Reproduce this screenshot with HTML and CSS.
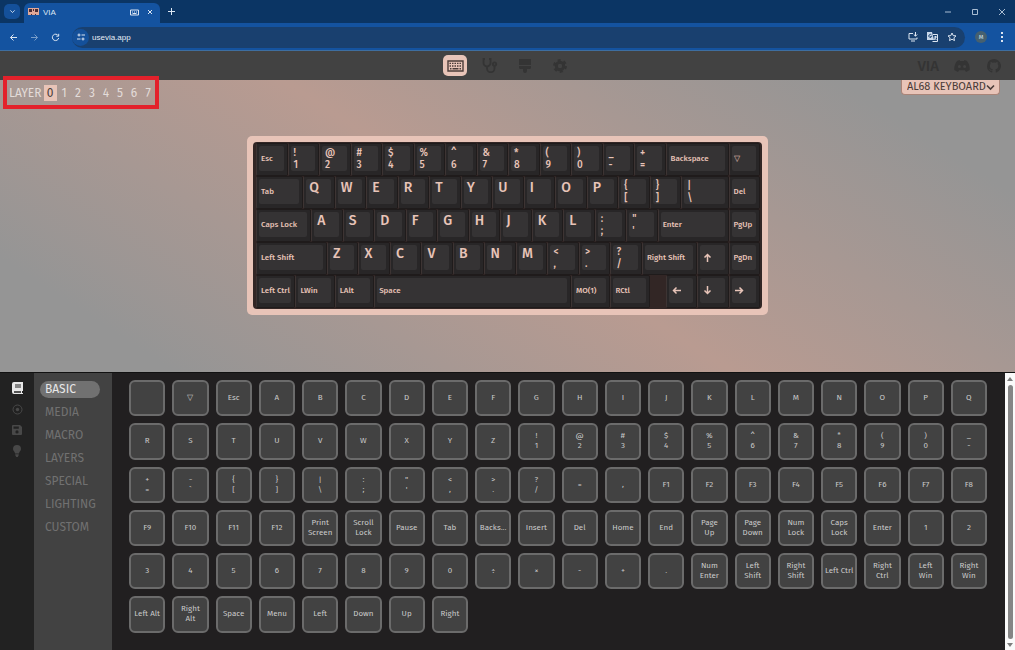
FILE: index.html
```html
<!DOCTYPE html>
<html lang="en">
<head>
    <meta charset="UTF-8">
    <title>VIA</title>
    <link rel="stylesheet" href="styles.css">
</head>
<body>
    <div class="tab-strip">
        <button class="tab-search" aria-label="Search tabs">
            <svg width="7" height="7" viewBox="0 0 8 8"><path d="M1.5 2.7 4 5.2l2.5-2.5"/></svg>
        </button>
        <div class="tab">
            <svg class="favicon" width="11" height="8" viewBox="0 0 11 8"><path fill="#e0a898" d="M0 0h11v7H0z"/><path fill="#4a2c35" d="M1 1h3v3H1zM7 1h3v3H7zM5 1h1v2H5zM3 6h1v1H3zm4 0h1v1H7z"/></svg>
            <span class="tab-title">VIA</span>
            <svg width="9" height="7" viewBox="0 0 9 7"><path d="M.5 1h8v5h-8zM2 3h1M4 3h1M6 3h1M2.500 4.500h4"/></svg>
            <button class="icon-btn" aria-label="Close tab"><svg width="6" height="6" viewBox="0 0 6 6"><path d="m1 1 4 4M5 1 1 5"/></svg></button>
        </div>
        <button class="icon-btn" aria-label="New tab"><svg width="7" height="7" viewBox="0 0 7 7"><path d="M3.500 0v7M0 3.500h7"/></svg></button>
        <div class="window-controls">
            <button class="icon-btn" aria-label="Minimize"><svg width="8" height="8" viewBox="0 0 8 8"><path d="M1 4h6"/></svg></button>
            <button class="icon-btn" aria-label="Maximize"><svg width="8" height="8" viewBox="0 0 8 8"><path d="M1.500 1.500h5v5h-5z"/></svg></button>
            <button class="icon-btn" aria-label="Close"><svg width="8" height="8" viewBox="0 0 8 8"><path d="m1 1 6 6M7 1 1 7"/></svg></button>
        </div>
    </div>

    <div class="toolbar">
        <button class="icon-btn" aria-label="Back"><svg width="9" height="9" viewBox="0 0 9 9"><path d="M8 4.500H1.500M4.500 1.500l-3 3 3 3"/></svg></button>
        <button class="icon-btn faded" aria-label="Forward"><svg width="9" height="9" viewBox="0 0 9 9"><path d="M1 4.500h6.500M4.500 1.500l3 3-3 3"/></svg></button>
        <button class="icon-btn" aria-label="Reload"><svg width="9" height="9" viewBox="0 0 9 9"><path d="M7.300 2.700A3.200 3.200 0 1 0 7.700 5M7.700.8v2.400H5.300"/></svg></button>
        <div class="address-bar">
            <button class="site-info" aria-label="Site information"><svg width="8" height="8" viewBox="0 0 8 8"><circle cx="2" cy="2" r="1"/><path d="M4.500 2H8M0 6h3.500"/><circle cx="6" cy="6" r="1"/></svg></button>
            <input type="text" aria-label="Address" value="usevia.app">
            <button class="icon-btn" aria-label="Install"><svg width="10" height="10" viewBox="0 0 10 10"><path d="M5 1.500H1v5.500h8V5.500M3 9h4M7.500 0v4M5.800 2.500l1.700 1.700 1.700-1.700"/></svg></button>
            <button class="icon-btn" aria-label="Translate"><svg width="11" height="10" viewBox="0 0 11 10"><path fill="#c9d8ea" stroke="none" d="M0 0h5l2 8H0z"/><path d="M6 2.500h4.500v7h-5M7 5h3M8.500 4v1c0 1-.5 2-1.500 3M7.500 6l2 2"/><path stroke="#19406f" d="M4.500 3A1.500 1.500 0 1 0 4.700 4.500H3.300"/></svg></button>
            <button class="icon-btn" aria-label="Bookmark"><svg width="10" height="10" viewBox="0 0 10 10"><path d="m5 1 1.200 2.600 2.800.3-2.100 1.900.6 2.800L5 7.200 2.500 8.600l.6-2.800L1 3.900l2.800-.3z"/></svg></button>
        </div>
        <button class="avatar">M</button>
        <button class="icon-btn" aria-label="Menu"><svg width="4" height="10" viewBox="0 0 4 10"><path fill="#dce6f2" stroke="none" d="M1 0h2v2H1zM1 4h2v2H1zM1 8h2v2H1z"/></svg></button>
    </div>

    <header class="app-header">
        <nav class="panes">
            <a class="pane active" href="#" aria-label="Configure"><svg width="17" height="12" viewBox="0 0 17 12"><path fill="none" stroke="currentColor" stroke-width="1.400" d="M1 1h15v10H1z"/><path fill="none" stroke="currentColor" stroke-width="1.400" stroke-dasharray="1.500 1" d="M2.500 3.400h12M2.500 6h12"/><path stroke="currentColor" stroke-width="1.400" d="M3 8.700h1.500M5.500 8.700h6M12.500 8.700H14"/></svg></a>
            <a class="pane" href="#" aria-label="Key tester"><svg width="16" height="15" viewBox="0 0 16 15"><g fill="none" stroke="currentColor" stroke-width="1.800"><path d="M3 1H1.500v4a3.500 3.500 0 0 0 7 0V1H7M5 9v1.500a3.700 3.700 0 0 0 7.500 0V8"/><circle cx="12.500" cy="6" r="1.700"/></g></svg></a>
            <a class="pane" href="#" aria-label="Design"><svg width="12" height="14" viewBox="0 0 12 14"><path fill="currentColor" d="M0 0h12v6H0zM0 7h12v1.500a1.500 1.500 0 0 1-1.500 1.500H8v2a2 2 0 0 1-4 0v-2H1.500A1.500 1.500 0 0 1 0 8.500z"/></svg></a>
            <a class="pane" href="#" aria-label="Settings"><svg width="14" height="14" viewBox="0 0 14 14"><circle cx="7" cy="7" r="3.700" fill="none" stroke="currentColor" stroke-width="3"/><circle cx="7" cy="7" r="5.800" fill="none" stroke="currentColor" stroke-width="2.200" stroke-dasharray="3 3.070"/></svg></a>
        </nav>
        <div class="links">
            <a class="via" href="#">VIA</a>
            <a href="#" aria-label="Discord"><svg width="16" height="12" viewBox="0 0 16 12"><path fill="currentColor" fill-rule="evenodd" d="M5.500 0 3 1C1 3.500 0 7 .3 10L4 12l1-1.700h6L12 12l3.700-2C16 7 15 3.500 13 1L10.500 0 10 1H6zM5.400 5a1.500 1.500 0 1 1 0 3 1.500 1.500 0 0 1 0-3zm5.200 0a1.500 1.500 0 1 1 0 3 1.500 1.500 0 0 1 0-3z"/></svg></a>
            <a href="#" aria-label="GitHub"><svg width="14" height="14" viewBox="0 0 14 14"><path fill="currentColor" d="M7 0a7 7 0 0 0-2.200 13.600c.4 0 .5-.2.500-.4v-1.300c-2 .4-2.500-.8-2.500-.8-.3-.8-.8-1-.8-1 1-.5 1.500.6 1.500.6.700 1 1.500.7 1.900.6 0-.5.300-.8.500-1C4.300 10 2.900 9.400 2.900 6.900c0-.8.200-1.400.7-1.900 0-.2-.3-.9.100-1.900 0 0 .6-.2 1.900.7a6.600 6.600 0 0 1 3 0c1.300-.9 1.900-.7 1.900-.7.400 1 .1 1.700.1 1.900.5.500.7 1.100.7 1.900 0 2.500-1.500 3.100-3 3.300.300.200.500.600.500 1.300v1.700c0 .2.100.4.500.4A7 7 0 0 0 7 0z"/></svg></a>
        </div>
    </header>

    <main class="canvas">
        <div class="layers" id="layers">
            <span>LAYER</span>
            <div class="marker"></div>
        </div>
        <div class="device">
            <select aria-label="Keyboard">
                <option>AL68 KEYBOARD</option>
            </select>
            <svg width="9" height="7" viewBox="0 0 9 7"><path fill="none" stroke="#4b3c39" stroke-width="1.600" d="m1 1.500 3.500 3.500L8 1.500"/></svg>
        </div>
        <div class="board">
            <div class="keys" id="keys"></div>
        </div>
    </main>

    <div class="config">
        <nav class="rail">
            <a class="active" href="#" aria-label="Keymap"><svg width="11" height="12" viewBox="0 0 11 12"><path fill="currentColor" fill-rule="evenodd" d="M2 0h9v9h-1v2h1v1H2a2 2 0 0 1-2-2V2a2 2 0 0 1 2-2zm0 9.200v1.600h7V9.200zM3 2.500v1h6v-1zm0 2v1h6v-1z"/></svg></a>
            <a href="#" aria-label="Macros"><svg width="11" height="11" viewBox="0 0 11 11"><circle cx="5.500" cy="5.500" r="4.500" fill="none" stroke="currentColor"/><circle cx="5.500" cy="5.500" r="1.700" fill="currentColor"/></svg></a>
            <a href="#" aria-label="Save"><svg width="10" height="10" viewBox="0 0 10 10"><path fill="currentColor" fill-rule="evenodd" d="M1 0h7l2 2v7a1 1 0 0 1-1 1H1a1 1 0 0 1-1-1V1a1 1 0 0 1 1-1zm.5 1.500v2.300h5.300V1.500zM5 5.300a1.600 1.600 0 1 0 0 3.200 1.600 1.600 0 0 0 0-3.200z"/></svg></a>
            <a href="#" aria-label="Lighting"><svg width="8" height="12" viewBox="0 0 8 12"><path fill="currentColor" d="M4 0a4 4 0 0 1 4 4c0 2-2 2.600-2 4.500H2C2 6.600 0 6 0 4a4 4 0 0 1 4-4zM2.300 9.200h3.400v1L4.700 12H3.300l-1-1.800z"/></svg></a>
        </nav>
        <nav class="menu">
            <a class="active" href="#">BASIC</a>
            <a href="#">MEDIA</a>
            <a href="#">MACRO</a>
            <a href="#">LAYERS</a>
            <a href="#">SPECIAL</a>
            <a href="#">LIGHTING</a>
            <a href="#">CUSTOM</a>
        </nav>
        <div class="keycodes" id="keycodes"></div>
        <div class="scrollbar">
            <svg width="6" height="4" viewBox="0 0 6 4"><path fill="#7d7d7d" d="m3 0 3 4H0z"/></svg>
            <div class="thumb"></div>
            <svg width="6" height="4" viewBox="0 0 6 4"><path fill="#7d7d7d" d="M0 0h6L3 4z"/></svg>
        </div>
    </div>

    <script>
        // a plain string is a 1u key, [label, units] a wider one
        const rows = [
            ['Esc', '! 1', '@ 2', '# 3', '$ 4', '% 5', '^ 6', '& 7', '* 8', '( 9', ') 0', '_ -', '+ =', ['Backspace', 2], '▽'],
            [['Tab', 1.5], ...'QWERTYUIOP', '{ [', '} ]', ['| \\', 1.5], 'Del'],
            [['Caps Lock', 1.75], ...'ASDFGHJKL', ': ;', '" \'', ['Enter', 2.25], 'PgUp'],
            [['Left Shift', 2.25], ...'ZXCVBNM', '< ,', '> .', '? /', ['Right Shift', 1.75], '↑', 'PgDn'],
            [['Left Ctrl', 1.25], ['LWin', 1.25], ['LAlt', 1.25], ['Space', 6.25], ['MO(1)', 1.25], ['RCtl', 1.25], [null, 0.5], '←', '↓', '→']
        ];

        const arrows = {
            '↑': 'M4.500 9V1.500M1.500 4.500l3-3 3 3',
            '↓': 'M4.500 0v7.500M1.500 4.500l3 3 3-3',
            '←': 'M9 4.500H1.500M4.500 1.500l-3 3 3 3',
            '→': 'M0 4.500h7.500M4.500 1.500l3 3-3 3'
        };

        const keycodes = ['', '▽', 'Esc', ...'ABCDEFGHIJKLMNOPQRSTUVWXYZ',
            '!\n1', '@\n2', '#\n3', '$\n4', '%\n5', '^\n6', '&\n7', '*\n8', '(\n9', ')\n0', '_\n-',
            '+\n=', '~\n`', '{\n[', '}\n]', '|\n\\', ':\n;', '"\n\'', '<\n,', '>\n.', '?\n/', '=', ',',
            'F1', 'F2', 'F3', 'F4', 'F5', 'F6', 'F7', 'F8', 'F9', 'F10', 'F11', 'F12',
            'Print\nScreen', 'Scroll\nLock', 'Pause', 'Tab', 'Backs...', 'Insert', 'Del', 'Home', 'End',
            'Page\nUp', 'Page\nDown', 'Num\nLock', 'Caps\nLock', 'Enter',
            ...'1234567890', '÷', '×', '-', '+', '.',
            'Num\nEnter', 'Left\nShift', 'Right\nShift', 'Left Ctrl', 'Right\nCtrl', 'Left\nWin', 'Right\nWin',
            'Left Alt', 'Right\nAlt', 'Space', 'Menu', 'Left', 'Down', 'Up', 'Right'];

        const keysDiv = document.getElementById('keys');
        rows.forEach(row => row.forEach(item => {
            const [label, units] = Array.isArray(item) ? item : [item, 1];
            const key = document.createElement(label === null ? 'div' : 'button');
            key.style.gridColumn = 'span ' + units * 4;
            if (label !== null) {
                const face = document.createElement('span');
                key.className = 'key';
                face.className = 'face';
                if (arrows[label]) {
                    key.setAttribute('aria-label', label);
                    key.classList.add('symbol');
                    face.innerHTML = '<svg width="9" height="9" viewBox="0 0 9 9"><path d="' + arrows[label] + '"/></svg>';
                } else {
                    face.textContent = label;
                    if (/^[A-Z]$/.test(label)) key.classList.add('letter');
                    if (/^\S \S$/.test(label)) {
                        key.classList.add('symbol');
                        face.textContent = label.replace(' ', '\n');
                    }
                }
                key.appendChild(face);
            }
            keysDiv.appendChild(key);
        }));

        const keycodesDiv = document.getElementById('keycodes');
        keycodes.forEach(label => {
            const button = document.createElement('button');
            button.className = 'keycode';
            button.textContent = label;
            keycodesDiv.appendChild(button);
        });

        const layersDiv = document.getElementById('layers');
        for (let i = 0; i < 8; i++) {
            const button = document.createElement('button');
            button.className = i === 0 ? 'layer active' : 'layer';
            button.textContent = i;
            layersDiv.appendChild(button);
        }
    </script>
</body>
</html>
```
FILE: styles.css
```css
* { box-sizing: border-box; }
body { font-family: "Fira Sans", "Noto Sans", sans-serif; margin: 0; min-height: 100vh; display: flex; flex-direction: column; background-color: #222; }
button, input, select { font-family: inherit; margin: 0; padding: 0; border: none; background: none; color: inherit; }
button { cursor: pointer; }
a { text-decoration: none; color: inherit; }
svg { display: block; flex: none; }

/* browser window */
.tab-strip { height: 23px; display: flex; align-items: center; background-color: #0b3564; padding: 0 9px 0 4px; color: #dce6f2; }
.tab-strip svg, .toolbar svg { fill: none; stroke: #dce6f2; stroke-width: 1; }
.tab-strip .favicon { stroke: none; }
.tab-search { width: 16px; height: 15px; display: flex; align-items: center; justify-content: center; border-radius: 5px; background-color: #14509a; }
.tab { width: 136px; height: 20px; margin: 3px 8px 0 4px; padding: 0 7px 2px 4px; display: flex; align-items: center; gap: 8px; border-radius: 6px 6px 0 0; background-color: #1453a0; }
.tab-title { flex: 1; margin-left: -4px; font: 8px "Liberation Sans", sans-serif; }
.icon-btn { display: flex; align-items: center; justify-content: center; }
.window-controls { margin-left: auto; display: flex; gap: 19px; }
.window-controls svg { stroke: #a9bdd3; }
.toolbar { height: 28px; display: flex; align-items: center; gap: 12px; padding: 1px 11px 0 9px; background-color: #1453a0; border-bottom: 1px solid #3e6ea0; color: #dce6f2; }
.faded { opacity: 0.5; }
.address-bar { flex: 1; height: 21px; display: flex; align-items: center; gap: 9px; padding: 0 8px 0 0; border-radius: 11px; background-color: #19406f; }
.address-bar input { flex: 1; min-width: 0; margin-left: -6px; font: 8px "Liberation Sans", sans-serif; color: #e6edf5; }
.site-info { width: 17px; height: 17px; display: flex; align-items: center; justify-content: center; border-radius: 50%; background-color: #14509a; }
.avatar { width: 12px; height: 12px; margin: 0 1px 0 -2px; border-radius: 50%; background-color: #46606f; font-size: 6px; line-height: 12px; }

/* app header */
.app-header { height: 29px; display: grid; grid-template-columns: 1fr auto 1fr; align-items: center; background-color: #424242; color: #343434; }
.panes { grid-column: 2; display: flex; gap: 11px; }
.pane { width: 24px; height: 21px; display: flex; align-items: center; justify-content: center; border-radius: 5px; }
.pane.active { background-color: #e8c4b8; color: #4b3c39; }
.links { justify-self: end; display: flex; align-items: center; gap: 17px; padding-right: 14px; }
.via { margin-right: -2px; font-size: 15px; line-height: 20px; font-weight: 500; }

/* keyboard */
.canvas { position: relative; padding: 56px 0 57px; display: flex; justify-content: center; background: linear-gradient(33deg, #959595 12%, #b99b91 50%, #959595 88%); }
.layers { position: absolute; left: 9px; top: 5px; display: flex; align-items: center; font-size: 12px; line-height: 16px; color: #e3dcd9; }
.layers span { margin-right: 2px; }
.layer { width: 13px; height: 16px; font-size: 12px; line-height: 16px; text-align: center; }
.layer + .layer { margin-left: 1px; }
.layer.active { background-color: #e8c4b8; color: #4b3c39; }
.marker { position: absolute; left: -6px; top: -9px; width: 156px; height: 33px; border: 4px solid #e3212b; pointer-events: none; }
.device { position: absolute; right: 15px; top: 0; display: flex; }
.device select { width: 99px; height: 15px; padding-left: 5px; appearance: none; background-color: #e8c4b8; border: 1px solid #a98478; border-top: none; border-radius: 0 0 4px 4px; color: #4b3c39; font-size: 11px; line-height: 14px; }
.device svg { position: absolute; right: 5px; top: 4px; pointer-events: none; }
.board { width: 521px; padding: 6px; border-radius: 5px; background-color: #e8c4b8; }
.keys { display: grid; grid-template-columns: repeat(64, 1fr); grid-auto-rows: 33px; padding: 1px 2px 1px 3px; border-radius: 4px; background-color: #322625; }
.key { display: flex; padding: 2px 3px 4px 2px; background-color: #282627; border: 1px solid #1f1b1b; border-left-color: #3d3433; border-radius: 2px; }
.face { flex: 1; min-width: 0; height: 25px; display: flex; align-items: center; padding-left: 2px; border-radius: 2px; background-color: #353334; color: #e8c4b8; font-size: 8px; line-height: 10px; font-weight: 500; text-align: left; white-space: pre; }
.face svg { fill: none; stroke: #e8c4b8; stroke-width: 1.5; }
.letter .face { padding-left: 3px; font-size: 14px; line-height: 17px; align-items: flex-start; }
.symbol .face { padding-left: 3px; font-size: 10px; line-height: 12px; }

/* keycodes */
.config { flex: 1; display: flex; background-color: #222; border-top: 1px solid #111; }
.rail { width: 34px; display: flex; flex-direction: column; align-items: center; gap: 10px; padding-top: 9px; color: #484848; }
.rail .active { color: #e8e8e8; }
.menu { width: 78px; padding: 8px 12px 0 6px; display: flex; flex-direction: column; gap: 6px; background-color: #424242; }
.menu a { padding-left: 5px; border-radius: 9px; color: #717171; font-size: 12px; line-height: 17px; white-space: nowrap; }
.menu .active { background-color: #717171; color: #e8e8e8; }
.keycodes { flex: 1; display: grid; grid-template-columns: repeat(20, 1fr); gap: 7px; align-content: start; padding: 7px 18px 17px 17px; background-color: #211f20; }
.keycode { aspect-ratio: 1; min-width: 0; border: 2px solid #6b6b6b; border-radius: 6px; background-color: #424242; color: #c9c9c9; font-size: 8px; line-height: 10px; white-space: pre; display: flex; align-items: center; justify-content: center; text-align: center; }
.keycode:hover { border-color: #e8c4b8; }
.scrollbar { width: 10px; display: flex; flex-direction: column; align-items: center; gap: 4px; padding: 4px 0 3px; background-color: #fafafa; }
.thumb { flex: 1; width: 5px; border-radius: 3px; background-color: #858585; }
```
